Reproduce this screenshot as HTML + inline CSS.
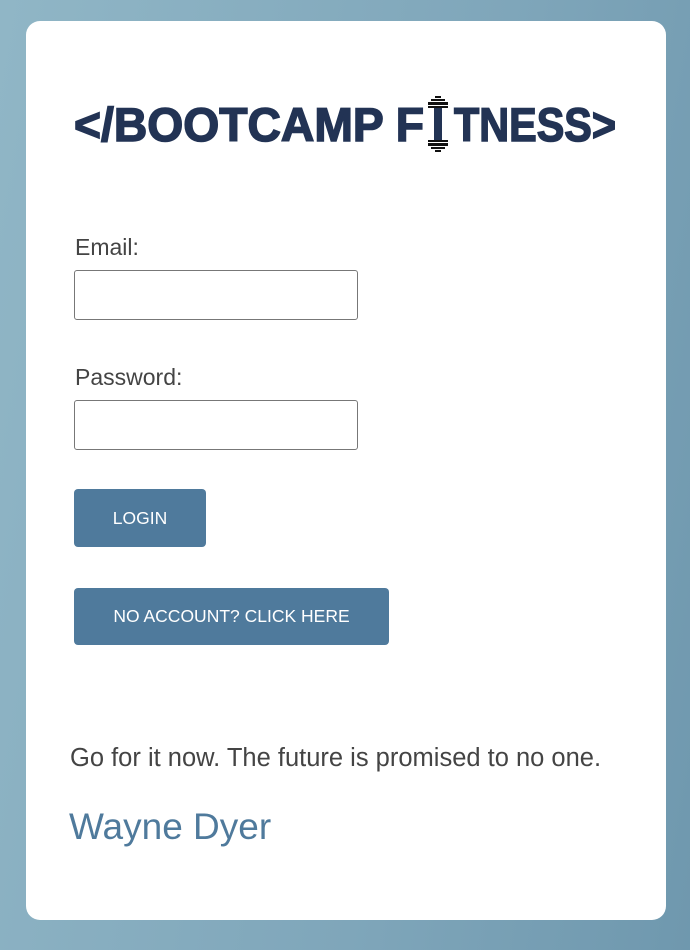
<!DOCTYPE html>
<html><head><style>
html,body{margin:0;padding:0}
body{width:690px;height:950px;background:linear-gradient(100deg,#90b6c6 0%,#7fa6ba 60%,#6f98ae 100%);position:relative;font-family:"Liberation Sans",sans-serif;overflow:hidden}
.card{position:absolute;left:26px;top:21px;width:640px;height:899px;background:#fff;border-radius:14px}
.lbl{position:absolute;left:75px;font-size:23px;color:#444}
.inp{position:absolute;left:74px;width:284px;height:50px;border:1px solid #777;border-radius:3px;box-sizing:border-box}
.btn{position:absolute;left:74px;background:#4f7a9c;color:#fff;font-size:17.5px;border-radius:4px;display:flex;align-items:center;justify-content:center}
</style></head><body>
<div class="card"></div>
<svg style="position:absolute;left:0;top:0" width="690" height="200">
<g fill="#223354" stroke="#223354" stroke-width="1.5" font-family="Liberation Sans" font-weight="bold" font-size="47">
<text x="74" y="141" textLength="350" lengthAdjust="spacingAndGlyphs">&lt;/BOOTCAMP F</text>
<text x="454" y="141" textLength="162" lengthAdjust="spacingAndGlyphs">TNESS&gt;</text>
</g>
<g fill="#111">
<rect x="435" y="96" width="6" height="2"/><rect x="431" y="99" width="14" height="2"/><rect x="428" y="102" width="20" height="3"/><rect x="428" y="106" width="20" height="2"/>
<rect x="434" y="108" width="8" height="33" fill="#223354"/>
<rect x="428" y="140" width="20" height="2"/><rect x="428" y="143" width="20" height="3"/><rect x="431" y="147" width="14" height="2"/><rect x="435" y="150" width="6" height="2"/>
</g>
</svg>
<div class="lbl" style="top:234px">Email:</div>
<div class="inp" style="top:270px"></div>
<div class="lbl" style="top:364px">Password:</div>
<div class="inp" style="top:400px"></div>
<div class="btn" style="top:489px;width:132px;height:58px">LOGIN</div>
<div class="btn" style="top:588px;width:315px;height:57px">NO ACCOUNT? CLICK HERE</div>
<div style="position:absolute;left:70px;top:744px;font-size:25.5px;color:#444">Go for it now. The future is promised to no one.</div>
<div style="position:absolute;left:69px;top:806px;font-size:37px;color:#4f7a9c">Wayne Dyer</div>
</body></html>
